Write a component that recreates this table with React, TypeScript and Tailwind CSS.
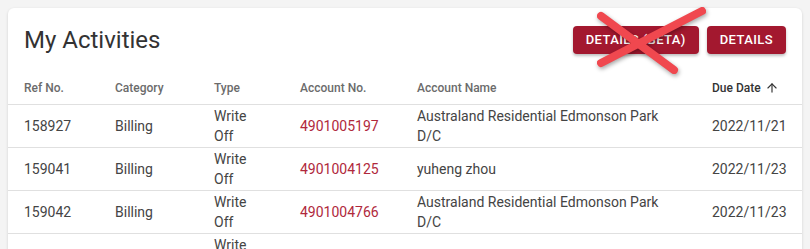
import { ArrowUp } from "lucide-react";

const rows = [
  { ref: "158927", category: "Billing", type: "Write Off", account: "4901005197", name: "Australand Residential Edmonson Park D/C", due: "2022/11/21" },
  { ref: "159041", category: "Billing", type: "Write Off", account: "4901004125", name: "yuheng zhou", due: "2022/11/23" },
  { ref: "159042", category: "Billing", type: "Write Off", account: "4901004766", name: "Australand Residential Edmonson Park D/C", due: "2022/11/23" },
  { ref: "159050", category: "Billing", type: "Write Off", account: "4901004888", name: "", due: "2022/11/24" },
];

const CrossOut = () => (
  <svg
    className="absolute left-[585px] top-0 pointer-events-none drop-shadow-[1px_2px_2px_rgba(0,0,0,0.35)]"
    width="130"
    height="80"
    viewBox="0 0 130 80"
  >
    <line x1="16" y1="16" x2="89" y2="70" stroke="#f0484f" strokeWidth="8" strokeLinecap="round" />
    <line x1="117" y1="11" x2="16" y2="63" stroke="#f0484f" strokeWidth="8" strokeLinecap="round" />
  </svg>
);

const App = () => {
  return (
    <div className="relative h-[249px] overflow-hidden bg-[#f4f4f4] p-2 font-['Roboto',sans-serif]">
      <div className="bg-white rounded-md shadow-[0_1px_3px_rgba(0,0,0,0.15)]">
        {/* Header */}
        <div className="flex items-center justify-between h-16 px-4">
          <h1 className="text-2xl text-[#333] font-normal">My Activities</h1>
          <div className="flex gap-2">
            <button className="h-7 px-[13px] rounded bg-[#a3182f] text-white text-[13px] font-medium tracking-[0.4px] uppercase shadow-[0_2px_3px_rgba(0,0,0,0.25)]">
              Details (Beta)
            </button>
            <button className="h-7 px-[13px] rounded bg-[#a3182f] text-white text-[13px] font-medium tracking-[0.4px] uppercase shadow-[0_2px_3px_rgba(0,0,0,0.25)]">
              Details
            </button>
          </div>
        </div>

        <table className="w-full table-fixed border-collapse text-left">
          <colgroup>
            <col className="w-[91px]" />
            <col className="w-[99px]" />
            <col className="w-[86px]" />
            <col className="w-[117px]" />
            <col className="w-[295px]" />
            <col />
          </colgroup>
          <thead>
            <tr className="h-8 border-b border-[#e0e0e0] text-xs font-medium text-[#6b6b6b]">
              <th className="px-4 font-medium">Ref No.</th>
              <th className="px-4 font-medium">Category</th>
              <th className="px-4 font-medium">Type</th>
              <th className="px-4 font-medium">Account No.</th>
              <th className="px-4 font-medium">Account Name</th>
              <th className="pl-4 pr-2 font-medium text-[#333]">
                <span className="flex items-center gap-1 whitespace-nowrap">
                  Due Date <ArrowUp size={14} strokeWidth={2} />
                </span>
              </th>
            </tr>
          </thead>
          <tbody className="text-sm leading-5 text-[#444]">
            {rows.map((r) => (
              <tr key={r.ref} className="border-b border-[#e0e0e0]">
                <td className="px-4 py-px">{r.ref}</td>
                <td className="px-4 py-px">{r.category}</td>
                <td className="px-4 py-px">{r.type}</td>
                <td className="px-4 py-px text-[#b0283c]">{r.account}</td>
                <td className="px-4 py-px">{r.name}</td>
                <td className="pl-4 pr-2 py-px whitespace-nowrap">{r.due}</td>
              </tr>
            ))}
          </tbody>
        </table>
      </div>
      <CrossOut />
    </div>
  );
};

export default App;
